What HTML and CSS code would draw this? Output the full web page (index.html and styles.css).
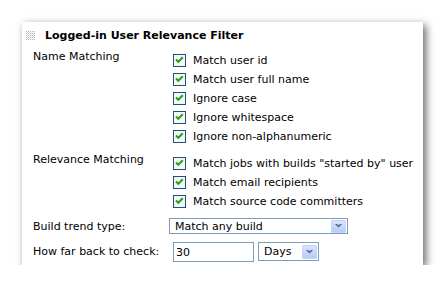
FILE: index.html
```html
<!DOCTYPE html>
<html lang="en">
<head>
  <meta charset="UTF-8">
  <title>Logged-in User Relevance Filter</title>
  <link rel="stylesheet" href="styles.css">
</head>
<body>

<div class="panel">
  <div class="panel-head">
    <svg class="grip" width="10" height="10" viewBox="0 0 10 10">
      <path d="M0 0h1v1H0zM2 0h1v1H2zM4 0h1v1H4zM6 0h1v1H6zM8 0h1v1H8zM0 2h1v1H0zM2 2h1v1H2zM4 2h1v1H4zM6 2h1v1H6zM8 2h1v1H8zM0 4h1v1H0zM2 4h1v1H2zM4 4h1v1H4zM6 4h1v1H6zM8 4h1v1H8zM0 6h1v1H0zM2 6h1v1H2zM4 6h1v1H4zM6 6h1v1H6zM8 6h1v1H8zM0 8h1v1H0zM2 8h1v1H2zM4 8h1v1H4zM6 8h1v1H6zM8 8h1v1H8z" fill="#b4b4b4"/>
      <path d="M1 1h1v1H1zM3 1h1v1H3zM5 1h1v1H5zM7 1h1v1H7zM1 3h1v1H1zM3 3h1v1H3zM5 3h1v1H5zM7 3h1v1H7zM1 5h1v1H1zM3 5h1v1H3zM5 5h1v1H5zM7 5h1v1H7zM1 7h1v1H1zM3 7h1v1H3zM5 7h1v1H5zM7 7h1v1H7z" fill="#dcdcdc"/>
    </svg>
    <span class="title">Logged-in User Relevance Filter</span>
  </div>

  <div class="form">
    <!-- name matching options -->
    <div class="group">
      <div class="label">Name Matching</div>
      <ul class="checks">
        <li><svg class="cb" viewBox="0 0 13 13"><rect x=".5" y=".5" width="12" height="12" fill="#f6f6f2" stroke="#1c5180"/><path d="M3 5.5l2.3 2.3L9.8 3.3" stroke="#21a121" stroke-width="2" fill="none"/></svg>Match user id</li>
        <li><svg class="cb" viewBox="0 0 13 13"><rect x=".5" y=".5" width="12" height="12" fill="#f6f6f2" stroke="#1c5180"/><path d="M3 5.5l2.3 2.3L9.8 3.3" stroke="#21a121" stroke-width="2" fill="none"/></svg>Match user full name</li>
        <li><svg class="cb" viewBox="0 0 13 13"><rect x=".5" y=".5" width="12" height="12" fill="#f6f6f2" stroke="#1c5180"/><path d="M3 5.5l2.3 2.3L9.8 3.3" stroke="#21a121" stroke-width="2" fill="none"/></svg>Ignore case</li>
        <li><svg class="cb" viewBox="0 0 13 13"><rect x=".5" y=".5" width="12" height="12" fill="#f6f6f2" stroke="#1c5180"/><path d="M3 5.5l2.3 2.3L9.8 3.3" stroke="#21a121" stroke-width="2" fill="none"/></svg>Ignore whitespace</li>
        <li><svg class="cb" viewBox="0 0 13 13"><rect x=".5" y=".5" width="12" height="12" fill="#f6f6f2" stroke="#1c5180"/><path d="M3 5.5l2.3 2.3L9.8 3.3" stroke="#21a121" stroke-width="2" fill="none"/></svg>Ignore non-alphanumeric</li>
      </ul>
    </div>

    <!-- relevance matching options -->
    <div class="group second">
      <div class="label">Relevance Matching</div>
      <ul class="checks">
        <li><svg class="cb" viewBox="0 0 13 13"><rect x=".5" y=".5" width="12" height="12" fill="#f6f6f2" stroke="#1c5180"/><path d="M3 5.5l2.3 2.3L9.8 3.3" stroke="#21a121" stroke-width="2" fill="none"/></svg>Match jobs with builds "started by" user</li>
        <li><svg class="cb" viewBox="0 0 13 13"><rect x=".5" y=".5" width="12" height="12" fill="#f6f6f2" stroke="#1c5180"/><path d="M3 5.5l2.3 2.3L9.8 3.3" stroke="#21a121" stroke-width="2" fill="none"/></svg>Match email recipients</li>
        <li><svg class="cb" viewBox="0 0 13 13"><rect x=".5" y=".5" width="12" height="12" fill="#f6f6f2" stroke="#1c5180"/><path d="M3 5.5l2.3 2.3L9.8 3.3" stroke="#21a121" stroke-width="2" fill="none"/></svg>Match source code committers</li>
      </ul>
    </div>

    <div class="row trend">
      <div class="label">Build trend type:</div>
      <div class="select wide">
        <span class="select-text">Match any build</span>
        <span class="drop"><svg width="7" height="4" viewBox="0 0 7 4"><path d="M0 0h2l1.5 1.5L5 0h2L3.5 3.5z" fill="#4d6185"/></svg></span>
      </div>
    </div>

    <div class="row back">
      <div class="label">How far back to check:</div>
      <div class="text-input">30</div>
      <div class="select small">
        <span class="select-text">Days</span>
        <span class="drop"><svg width="7" height="4" viewBox="0 0 7 4"><path d="M0 0h2l1.5 1.5L5 0h2L3.5 3.5z" fill="#4d6185"/></svg></span>
      </div>
    </div>
  </div>
</div>

</body>
</html>
```

FILE: styles.css
```css
body {
  margin: 0;
  padding: 0;
  background-color: #fff;
  font-family: "DejaVu Sans", Verdana, sans-serif;
  font-size: 11px;
  color: #000;
}
.panel {
  margin: 22px 0 0 22px;
  width: 401px;
  height: 243px;
  background: #fff;
  box-shadow: 3px 3px 8px rgba(0,0,0,0.6);
  box-sizing: border-box;
}
.panel-head {
  display: flex;
  align-items: center;
  height: 22px;
  padding: 5px 0 0 4px;
  box-sizing: border-box;
}
.grip {
  display: block;
  margin-right: 9px;
}
.title {
  font-weight: bold;
  line-height: 13px;
}
.form {
  padding: 6px 0 0 11px;
}
.group {
  display: flex;
}
.group.second {
  margin-top: 7px;
}
.label {
  width: 136px;
  line-height: 13px;
  flex-shrink: 0;
}
.checks {
  list-style: none;
  margin: 0;
  padding: 1px 0 0 0;
}
.checks li {
  display: flex;
  align-items: center;
  height: 19px;
  white-space: nowrap;
}
.cb {
  display: block;
  width: 13px;
  height: 13px;
  margin: 0 7px 0 4px;
}
.row {
  display: flex;
  align-items: center;
  margin-top: 7px;
}
.row.back {
  align-items: flex-start;
  margin-top: 8px;
}
.row.back .label {
  margin-top: 3px;
}
.select {
  display: flex;
  align-items: center;
  justify-content: space-between;
  border: 1px solid #7f9db9;
  box-sizing: border-box;
  background: #fff;
  padding: 0 1px 0 5px;
}
.select.wide {
  width: 179px;
  height: 16px;
}
.select.small {
  width: 61px;
  height: 19px;
  margin-left: 4px;
}
.select-text {
  line-height: 13px;
}
.drop {
  display: flex;
  align-items: center;
  justify-content: center;
  width: 15px;
  height: 13px;
  border-radius: 2px;
  background: linear-gradient(#dbe6fd, #b5c9f7);
  box-shadow: inset 0 0 0 1px #c3d3fd;
}
.select.small .drop {
  height: 14px;
}
.drop svg {
  display: block;
}
.text-input {
  width: 81px;
  height: 20px;
  margin-left: 4px;
  border: 1px solid #7f9db9;
  box-sizing: border-box;
  padding: 3px 0 0 2px;
  line-height: 13px;
}
```
